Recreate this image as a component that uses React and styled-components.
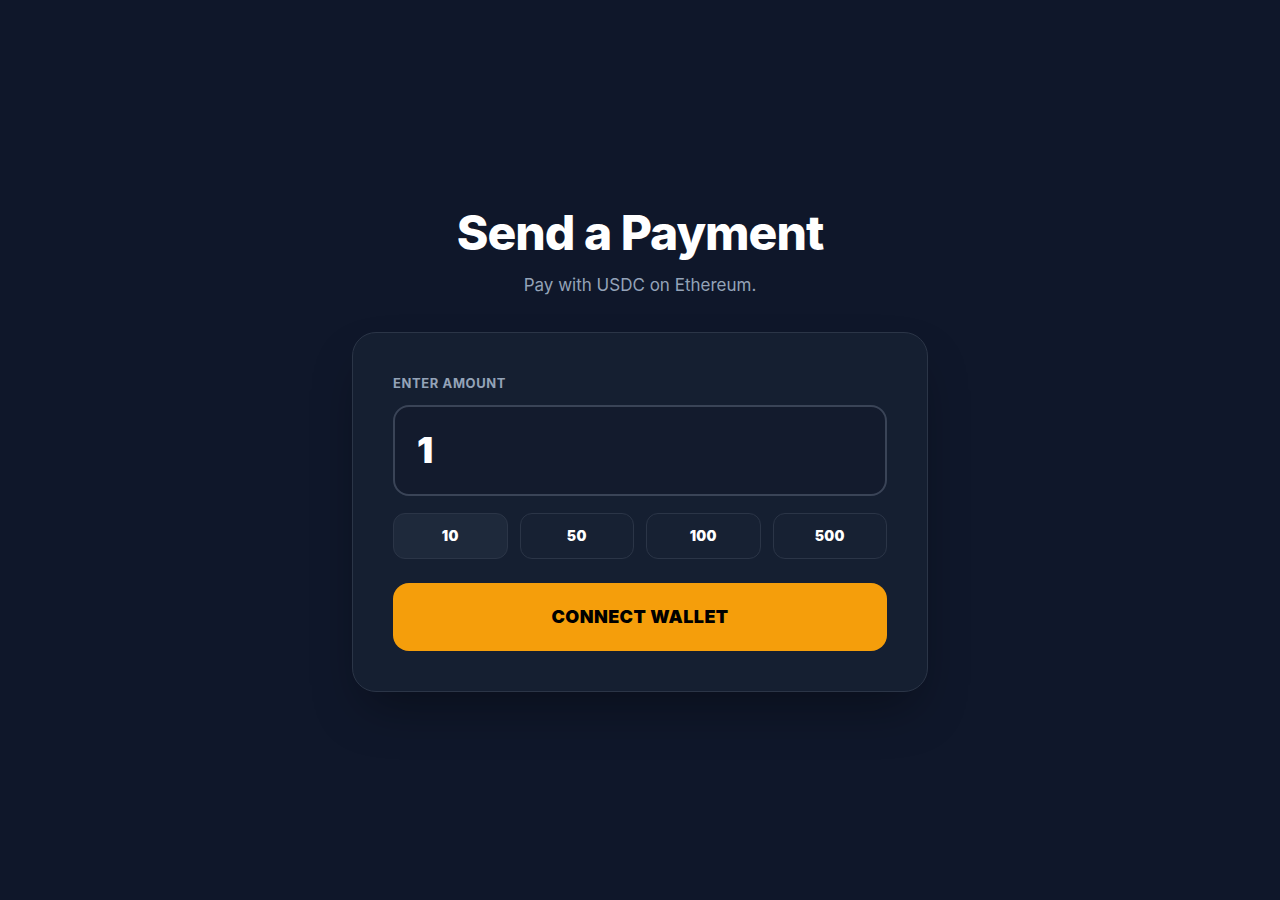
import React, { useState } from "react";
import styled, { createGlobalStyle } from "styled-components";

const GlobalStyle = createGlobalStyle`
  * { box-sizing: border-box; }
  body {
    margin: 0;
    background: #0f172a;
    font-family: Inter, "Noto Sans", sans-serif;
    color: #f8fafc;
  }
`;

const Page = styled.div`
  min-height: 100vh;
  display: flex;
  flex-direction: column;
  align-items: center;
  justify-content: center;
`;

const Title = styled.h1`
  margin: 0;
  font-size: 48px;
  line-height: 1;
  font-weight: 800;
  letter-spacing: -1px;
  color: #ffffff;
`;

const Subtitle = styled.p`
  margin: 14px 0 0;
  font-size: 17px;
  line-height: 28px;
  color: #94a3b8;
`;

const Card = styled.div`
  margin-top: 33px;
  width: 576px;
  padding: 40px;
  background: #151f31;
  border: 1px solid #2b3547;
  border-radius: 24px;
  box-shadow: 0 25px 50px -12px rgba(0, 0, 0, 0.35);
  display: flex;
  flex-direction: column;
`;

const Label = styled.label`
  font-size: 13px;
  font-weight: 700;
  letter-spacing: 0.6px;
  text-transform: uppercase;
  color: #94a3b8;
  line-height: 20px;
  margin-bottom: 12px;
`;

const AmountInput = styled.input`
  width: 100%;
  height: 91px;
  padding: 0 22px;
  background: #131b2d;
  border: 2px solid #3a4457;
  border-radius: 16px;
  color: #ffffff;
  font-family: Inter, sans-serif;
  font-size: 36px;
  font-weight: 900;
  outline: none;
`;

const Presets = styled.div`
  display: grid;
  grid-template-columns: repeat(4, 1fr);
  gap: 12px;
  margin-top: 17px;
`;

const Preset = styled.button`
  height: 46px;
  border-radius: 12px;
  border: 1px solid #2b3547;
  background: ${(p) => (p.$active ? "#1e293b" : "#172133")};
  color: #ffffff;
  font-family: Inter, sans-serif;
  font-size: 14px;
  font-weight: 900;
  letter-spacing: 0.3px;
  cursor: pointer;
`;

const ConnectButton = styled.button`
  margin-top: 24px;
  height: 68px;
  border: none;
  border-radius: 16px;
  background: #f59e0b;
  color: #000000;
  font-family: Inter, sans-serif;
  font-size: 18px;
  font-weight: 900;
  letter-spacing: 0.4px;
  text-transform: uppercase;
  cursor: pointer;
`;

const presets = [10, 50, 100, 500];

export default function App() {
  const [amount, setAmount] = useState("1");

  return (
    <>
      <GlobalStyle />
      <Page>
        <Title>Send a Payment</Title>
        <Subtitle>Pay with USDC on Ethereum.</Subtitle>
        <Card>
          <Label htmlFor="amount">Enter Amount</Label>
          <AmountInput
            id="amount"
            value={amount}
            onChange={(e) => setAmount(e.target.value)}
          />
          <Presets>
            {presets.map((v, i) => (
              <Preset key={v} $active={i === 0} onClick={() => setAmount(String(v))}>
                {v}
              </Preset>
            ))}
          </Presets>
          <ConnectButton>Connect Wallet</ConnectButton>
        </Card>
      </Page>
    </>
  );
}
